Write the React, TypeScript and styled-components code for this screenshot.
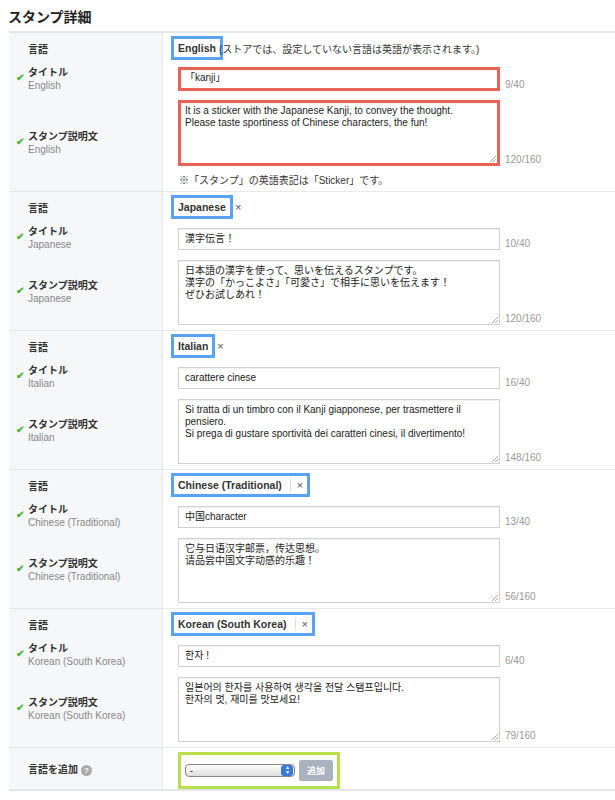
import styled, { createGlobalStyle } from "styled-components";

const Global = createGlobalStyle`
  body { margin: 0; background: #fff; font-family: "Liberation Sans", "Noto Sans CJK JP", sans-serif; }
`;

type Lang = {
  name: string;
  title: string;
  titleCount: string;
  desc: string;
  descCount: string;
  closable?: boolean;
  divider?: boolean;
  note?: string;
  hot?: boolean;
};

const langs: Lang[] = [
  {
    name: "English",
    title: "「kanji」",
    titleCount: "9/40",
    desc: "It is a sticker with the Japanese Kanji, to convey the thought.\nPlease taste sportiness of Chinese characters, the fun!",
    descCount: "120/160",
    note: "※「スタンプ」の英語表記は「Sticker」です。",
    hot: true,
  },
  {
    name: "Japanese",
    title: "漢字伝言！",
    titleCount: "10/40",
    desc: "日本語の漢字を使って、思いを伝えるスタンプです。\n漢字の「かっこよさ」「可愛さ」で相手に思いを伝えます！\nぜひお試しあれ！",
    descCount: "120/160",
    closable: true,
  },
  {
    name: "Italian",
    title: "carattere cinese",
    titleCount: "16/40",
    desc: "Si tratta di un timbro con il Kanji giapponese, per trasmettere il pensiero.\nSi prega di gustare sportività dei caratteri cinesi, il divertimento!",
    descCount: "148/160",
    closable: true,
  },
  {
    name: "Chinese (Traditional)",
    title: "中国character",
    titleCount: "13/40",
    desc: "它与日语汉字邮票，传达思想。\n请品尝中国文字动感的乐趣！",
    descCount: "56/160",
    closable: true,
    divider: true,
  },
  {
    name: "Korean (South Korea)",
    title: "한자 !",
    titleCount: "6/40",
    desc: "일본어의 한자를 사용하여 생각을 전달 스탬프입니다.\n한자의 멋, 재미를 맛보세요!",
    descCount: "79/160",
    closable: true,
    divider: true,
  },
];

const Heading = styled.h1`
  margin: 0;
  padding: 6px 8px 0;
  height: 25px;
  font-size: 14px;
  font-weight: bold;
  color: #222;
`;

const Table = styled.div`
  margin-left: 9px;
  border-top: 2px solid #e4e6ea;
  border-bottom: 2px solid #e4e6ea;
`;

const Section = styled.div`
  display: grid;
  grid-template-columns: 154px 1fr;
  border-bottom: 1px solid #e8e9ec;
  &:last-child { border-bottom: none; }
`;

const Label = styled.div<{ $h: number }>`
  background: #f6f7f9;
  border-right: 1px solid #e8e9ec;
  height: ${({ $h }) => $h}px;
  display: flex;
  flex-direction: column;
  justify-content: center;
  padding-left: 19px;
  font-size: 10px;
  font-weight: bold;
  color: #333;
  position: relative;
`;

const Check = styled.span`
  position: absolute;
  left: 7px;
  color: #4bb531;
  font-size: 10px;
`;

const Sub = styled.span`
  font-weight: normal;
  color: #888;
  font-size: 10px;
  margin-top: 1px;
`;

const Cell = styled.div<{ $h: number }>`
  height: ${({ $h }) => $h}px;
  display: flex;
  align-items: flex-end;
  padding-left: 15px;
  gap: 5px;
`;

const LangCell = styled.div<{ $h: number }>`
  height: ${({ $h }) => $h}px;
  display: flex;
  align-items: center;
  padding-left: 8px;
  font-size: 10px;
  color: #333;
`;

const Tag = styled.span`
  display: inline-flex;
  align-items: center;
  gap: 8px;
  border: 3px solid #5aa2f2;
  padding: 3px 4px;
  font-size: 10.5px;
  font-weight: bold;
  color: #333;
`;

const Close = styled.span<{ $divider?: boolean }>`
  font-weight: normal;
  color: #555;
  font-size: 11px;
  ${({ $divider }) => $divider && "border-left: 1px solid #ddd; padding-left: 6px;"}
`;

const Outside = styled.span`
  color: #555;
  font-size: 11px;
  margin-left: 2px;
`;

const Field = styled.div<{ $hot?: boolean; $h: number }>`
  width: 322px;
  height: ${({ $h }) => $h}px;
  box-sizing: border-box;
  border: ${({ $hot }) => ($hot ? "3px solid #e8625a" : "1px solid #cfd1d5")};
  padding: ${({ $hot }) => ($hot ? "2px 4px" : "4px 6px")};
  font-size: 10px;
  line-height: 12px;
  color: #222;
  white-space: pre-wrap;
  background: #fff;
  position: relative;
  box-shadow: inset 0 1px 1px rgba(0,0,0,0.06);
`;

const Grip = styled.svg`
  position: absolute;
  right: 1px;
  bottom: 1px;
`;

const Count = styled.span`
  font-size: 10px;
  color: #999;
  padding-bottom: 1px;
`;

const Note = styled.div`
  padding: 6px 0 0 16px;
  font-size: 10px;
  color: #333;
`;

const AddBox = styled.div`
  display: inline-flex;
  align-items: center;
  gap: 4px;
  border: 3px solid #b7e04c;
  padding: 5px 4px;
  margin: 4px 0 0 15px;
`;

const Select = styled.div`
  width: 110px;
  height: 13px;
  border: 1px solid #888;
  border-radius: 4px;
  background: linear-gradient(#fff, #ddd);
  font-size: 9px;
  display: flex;
  align-items: center;
  justify-content: space-between;
  padding-left: 4px;
  box-sizing: border-box;
`;

const Arrows = styled.span`
  width: 12px;
  height: 11px;
  background: #3a78d8;
  border-radius: 3px;
  color: #fff;
  font-size: 6px;
  line-height: 5px;
  text-align: center;
  margin-right: 1px;
`;

const AddButton = styled.span`
  background: #aab2c0;
  color: #fff;
  font-size: 9px;
  font-weight: bold;
  padding: 4px 8px;
  border-radius: 2px;
`;

const Help = styled.span`
  display: inline-flex;
  width: 11px;
  height: 11px;
  border-radius: 50%;
  background: #aaa;
  color: #fff;
  font-size: 8px;
  align-items: center;
  justify-content: center;
  margin-left: 3px;
`;

const ResizeGrip = () => (
  <Grip width="7" height="7" viewBox="0 0 7 7">
    <path d="M7 1L1 7M7 4L4 7" stroke="#999" strokeWidth="0.8" />
  </Grip>
);

const LangSection = ({ l }: { l: Lang }) => {
  const descH = l.note ? 100 : 80;
  return (
    <Section>
      <Label $h={30}>言語</Label>
      <LangCell $h={30}>
        <Tag>
          {l.name}
          {l.closable && l.divider && <Close $divider>×</Close>}
        </Tag>
        {l.closable && !l.divider && <Outside>×</Outside>}
        {!l.closable && (
          <span style={{ marginLeft: -4 }}>(ストアでは、設定していない言語は英語が表示されます。)</span>
        )}
      </LangCell>
      <Label $h={28}>
        <Check>✔</Check>タイトル<Sub>{l.name}</Sub>
      </Label>
      <Cell $h={28}>
        <Field $hot={l.hot} $h={l.hot ? 24 : 22}>{l.title}</Field>
        <Count>{l.titleCount}</Count>
      </Cell>
      <Label $h={descH}>
        <Check>✔</Check>スタンプ説明文<Sub>{l.name}</Sub>
      </Label>
      <div>
        <Cell $h={75}>
          <Field $hot={l.hot} $h={l.hot ? 66 : 65}>
            {l.desc}
            <ResizeGrip />
          </Field>
          <Count>{l.descCount}</Count>
        </Cell>
        {l.note && <Note>{l.note}</Note>}
      </div>
    </Section>
  );
};

const App = () => (
  <>
    <Global />
    <Heading>スタンプ詳細</Heading>
    <Table>
      {langs.map((l) => (
        <LangSection key={l.name} l={l} />
      ))}
      <Section>
        <Label $h={40}>
          <span>
            言語を追加<Help>?</Help>
          </span>
        </Label>
        <div>
          <AddBox>
            <Select>
              -<Arrows>▴<br />▾</Arrows>
            </Select>
            <AddButton>追加</AddButton>
          </AddBox>
        </div>
      </Section>
    </Table>
  </>
);

export default App;
